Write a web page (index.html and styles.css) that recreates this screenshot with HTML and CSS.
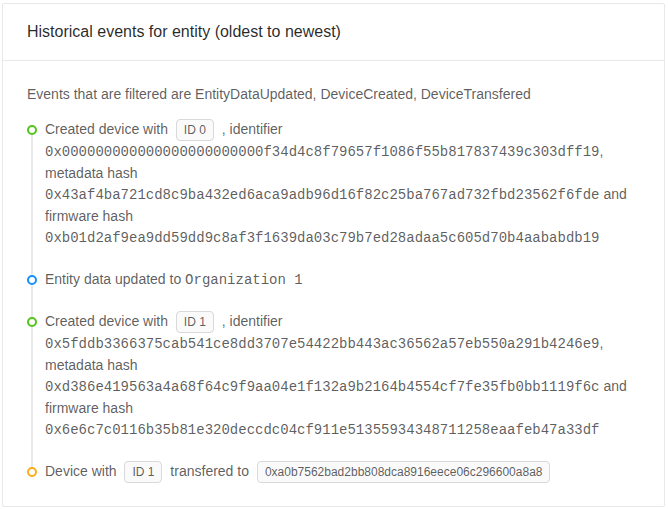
FILE: index.html
```html
<!DOCTYPE html>
<html>
<head>
<meta charset="utf-8">
<link rel="stylesheet" href="styles.css">
</head>
<body>
<div class="card">
  <div class="card-head">
    <div class="card-title">Historical events for entity (oldest to newest)</div>
  </div>
  <div class="card-body">
    <p class="intro">Events that are filtered are EntityDataUpdated, DeviceCreated, DeviceTransfered</p>
    <ul class="timeline">
      <li class="tl-item">
        <div class="tl-tail"></div>
        <div class="tl-dot dot-green"></div>
        <div class="tl-content">Created device with <span class="tag">ID 0</span> , identifier <code class="mono">0x000000000000000000000000f34d4c8f79657f1086f55b817837439c303dff19</code>, metadata hash <code class="mono">0x43af4ba721cd8c9ba432ed6aca9adb96d16f82c25ba767ad732fbd23562f6fde</code> and firmware hash <code class="mono">0xb01d2af9ea9dd59dd9c8af3f1639da03c79b7ed28adaa5c605d70b4aababdb19</code></div>
      </li>
      <li class="tl-item">
        <div class="tl-tail"></div>
        <div class="tl-dot dot-blue"></div>
        <div class="tl-content">Entity data updated to <code class="mono">Organization 1</code></div>
      </li>
      <li class="tl-item">
        <div class="tl-tail"></div>
        <div class="tl-dot dot-green"></div>
        <div class="tl-content">Created device with <span class="tag">ID 1</span> , identifier <code class="mono">0x5fddb3366375cab541ce8dd3707e54422bb443ac36562a57eb550a291b4246e9</code>, metadata hash <code class="mono">0xd386e419563a4a68f64c9f9aa04e1f132a9b2164b4554cf7fe35fb0bb1119f6c</code> and firmware hash <code class="mono">0x6e6c7c0116b35b81e320deccdc04cf911e51355934348711258eaafeb47a33df</code></div>
      </li>
      <li class="tl-item tl-last">
        <div class="tl-dot dot-orange"></div>
        <div class="tl-content">Device with <span class="tag">ID 1</span> transfered to <span class="tag">0xa0b7562bad2bb808dca8916eece06c296600a8a8</span></div>
      </li>
    </ul>
  </div>
</div>
</body>
</html>
```
FILE: styles.css
```css
html, body {
  margin: 0;
  padding: 0;
  background: #fff;
}
body {
  padding: 3px 3px 2px 2px;
  font-family: "Liberation Sans", Arial, sans-serif;
  font-size: 14px;
  line-height: 1.5;
  color: rgba(0, 0, 0, 0.65);
}
.card {
  border: 1px solid #e8e8e8;
  border-radius: 2px;
  background: #fff;
  height: 502px;
  box-sizing: content-box;
}
.card-head {
  padding: 0 24px;
  border-bottom: 1px solid #e8e8e8;
}
.card-title {
  padding: 16px 0 16px;
  font-size: 16px;
  line-height: 24px;
  color: rgba(0, 0, 0, 0.85);
}
.card-body {
  padding: 23px 24px 24px;
}
.intro {
  margin: 0 0 14px;
}
.timeline {
  list-style: none;
  margin: 0;
  padding: 0;
}
.tl-item {
  position: relative;
  padding: 0 0 20px;
}
.tl-item.tl-last {
  padding-bottom: 0;
}
.tl-tail {
  position: absolute;
  top: 16px;
  left: 4px;
  height: calc(100% - 10px);
  border-left: 2px solid #e8e8e8;
}
.tl-dot {
  position: absolute;
  top: 6px;
  left: 0;
  width: 10px;
  height: 10px;
  box-sizing: border-box;
  border: 2px solid;
  border-radius: 50%;
  background: #fff;
}
.dot-green { border-color: #52c41a; }
.dot-blue { border-color: #1890ff; }
.dot-orange { border-color: #faad14; }
.tl-content {
  margin-left: 18px;
  word-break: break-word;
}
.mono {
  font-family: "Liberation Mono", "Courier New", monospace;
  font-size: 14px;
}
.tag {
  display: inline-block;
  line-height: 20px;
  padding: 0 7px;
  font-size: 12px;
  border: 1px solid #d9d9d9;
  border-radius: 4px;
  background: #fafafa;
  margin: 0 4px 0 4px;
  color: rgba(0, 0, 0, 0.65);
}
```
